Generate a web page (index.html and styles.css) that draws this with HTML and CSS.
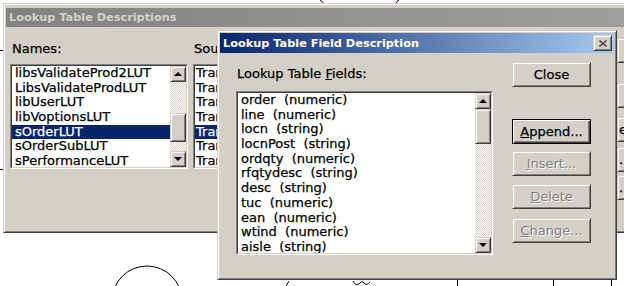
FILE: index.html
```html
<!DOCTYPE html>
<html lang="en">
<head>
    <meta charset="UTF-8">
    <title>Lookup Table Field Description</title>
    <link rel="stylesheet" href="styles.css">
</head>
<body>
    <svg class="sketch" width="624" height="286" viewBox="0 0 624 286">
        <path d="M320,0 q3,2 3,3" />
        <path d="M399,0 q-3,2 -3,3" />
        <line x1="0" y1="50.5" x2="3" y2="50.5" />
        <line x1="0" y1="169.5" x2="3" y2="169.5" />
        <circle cx="147" cy="301" r="35" />
        <line x1="289" y1="281" x2="286" y2="286" />
        <path d="M353,281 q3,6 7,2 q2,-3 4,0 q3,3 6,-1" />
        <line x1="457.5" y1="280" x2="457.5" y2="286" />
        <line x1="553.5" y1="280" x2="553.5" y2="286" />
        <path d="M611.5,286 V279.5 H617" />
    </svg>

    <div class="window bg-window">
        <div class="titlebar inactive">
            <span class="title">Lookup Table Descriptions</span>
        </div>
        <div class="bg-body">
            <div class="field names">
                <div class="label">Names:</div>
                <div class="listbox">
                    <div class="listbox-in">
                        <ul class="items">
                            <li>libsValidateProd2LUT</li>
                            <li>LibsValidateProdLUT</li>
                            <li>libUserLUT</li>
                            <li>libVoptionsLUT</li>
                            <li class="selected">sOrderLUT</li>
                            <li>sOrderSubLUT</li>
                            <li>sPerformanceLUT</li>
                        </ul>
                        <div class="vscroll">
                            <div class="sb-btn up"></div>
                            <div class="sb-track"><div class="sb-thumb" style="margin-top:31px;height:29px"></div></div>
                            <div class="sb-btn down"></div>
                        </div>
                    </div>
                </div>
            </div>
            <div class="field source">
                <div class="label">Source:</div>
                <div class="listbox">
                    <div class="listbox-in">
                        <ul class="items">
                            <li>Transfer</li>
                            <li>Transfer</li>
                            <li>Transfer</li>
                            <li>Transfer</li>
                            <li class="selected">Transfer</li>
                            <li>Transfer</li>
                            <li>Transfer</li>
                        </ul>
                    </div>
                </div>
            </div>
            <div class="bg-buttons">
                <div class="btn"></div>
                <div class="btn"></div>
                <div class="btn">e</div>
                <div class="btn">..</div>
                <div class="btn">..</div>
            </div>
        </div>
    </div>

    <div class="window dialog">
        <div class="titlebar">
            <span class="title">Lookup Table Field Description</span>
            <div class="close-btn">
                <svg width="8" height="7" viewBox="0 0 8 7"><path d="M0.5,0.5 L7.5,6.5 M7.5,0.5 L0.5,6.5" /></svg>
            </div>
        </div>
        <div class="dialog-body">
            <div class="field fields">
                <div class="label">Lookup Table <u>F</u>ields:</div>
                <div class="listbox">
                    <div class="listbox-in">
                        <ul class="items">
                            <li>order  (numeric)</li>
                            <li>line  (numeric)</li>
                            <li>locn  (string)</li>
                            <li>locnPost  (string)</li>
                            <li>ordqty  (numeric)</li>
                            <li>rfqtydesc  (string)</li>
                            <li>desc  (string)</li>
                            <li>tuc  (numeric)</li>
                            <li>ean  (numeric)</li>
                            <li>wtind  (numeric)</li>
                            <li>aisle  (string)</li>
                        </ul>
                        <div class="vscroll">
                            <div class="sb-btn up"></div>
                            <div class="sb-track"><div class="sb-thumb" style="margin-top:0;height:35px"></div></div>
                            <div class="sb-btn down"></div>
                        </div>
                    </div>
                </div>
            </div>
            <div class="actions">
                <div class="btn close">Close</div>
                <div class="btn default append"><u>A</u>ppend...</div>
                <div class="btn disabled insert"><u>I</u>nsert...</div>
                <div class="btn disabled delete"><u>D</u>elete</div>
                <div class="btn disabled change"><u>C</u>hange...</div>
            </div>
        </div>
    </div>
</body>
</html>
```

FILE: styles.css
```css
body {
    margin: 0;
    width: 624px;
    height: 286px;
    overflow: hidden;
    position: relative;
    background: #fff;
    font-family: "DejaVu Sans", sans-serif;
    font-size: 13px;
    color: #000;
    -webkit-text-stroke: 0.25px currentColor;
}

.sketch {
    position: absolute;
    left: 0;
    top: 0;
    fill: none;
    stroke: #000;
    stroke-width: 1;
}

/* classic raised frame */
.window,
.btn,
.sb-btn,
.sb-thumb,
.close-btn {
    border: 1px solid;
    border-color: #d4d0c8 #404040 #404040 #d4d0c8;
    box-shadow: inset 1px 1px #fff, inset -1px -1px #808080;
    background: #d4d0c8;
    box-sizing: border-box;
}

.window {
    position: absolute;
    display: flex;
    flex-direction: column;
    padding: 2px;
}

.bg-window {
    left: 3px;
    top: 3px;
    width: 700px;
    height: 230px;
    padding-top: 4px;
}

.dialog {
    left: 217px;
    top: 30px;
    width: 400px;
    height: 250px;
}

.titlebar {
    display: flex;
    align-items: center;
    height: 20px;
    padding: 0 2px 0 3px;
    background: linear-gradient(90deg, #0a246a, #a6caf0);
    color: #fff;
    font-weight: bold;
    font-size: 11.3px;
    flex-shrink: 0;
    -webkit-text-stroke: 0;
}

.titlebar.inactive {
    height: 19px;
    background: linear-gradient(90deg, #828282, #a2a2a2);
    color: #d4d0c8;
}

.title {
    flex: 1;
    white-space: nowrap;
}

.close-btn {
    width: 19px;
    height: 16px;
    display: flex;
    align-items: center;
    justify-content: center;
}

.close-btn svg {
    fill: none;
    stroke: #505050;
    stroke-width: 1.6;
}

.label {
    height: 16px;
    line-height: 16px;
    white-space: nowrap;
}

/* sunken list */
.listbox {
    border: 1px solid;
    border-color: #808080 #fff #fff #808080;
    box-sizing: border-box;
    margin-top: 7px;
}

.listbox-in {
    display: flex;
    height: 100%;
    border: 1px solid;
    border-color: #404040 #d4d0c8 #d4d0c8 #404040;
    box-sizing: border-box;
    background: #fff;
}

.items {
    flex: 1;
    margin: 0;
    padding: 0;
    list-style: none;
    overflow: hidden;
}

.items li {
    height: 14.7px;
    line-height: 14.7px;
    padding-left: 3px;
    white-space: pre;
}

.items li.selected {
    background: #0a246a;
    color: #fff;
}

.vscroll {
    width: 16px;
    display: flex;
    flex-direction: column;
    flex-shrink: 0;
}

.sb-btn {
    height: 16px;
    flex-shrink: 0;
    display: flex;
    align-items: center;
    justify-content: center;
}

.sb-btn::before {
    content: "";
    border-left: 4px solid transparent;
    border-right: 4px solid transparent;
}

.sb-btn.up::before {
    border-bottom: 4px solid #000;
}

.sb-btn.down::before {
    border-top: 4px solid #000;
}

.sb-track {
    flex: 1;
    background-image: repeating-conic-gradient(#fff 0 25%, #d4d0c8 0 50%);
    background-size: 2px 2px;
}

.sb-thumb {
    width: 16px;
}

/* background window */
.bg-body {
    display: flex;
    padding: 11px 0 0 4px;
}

.bg-body .label {
    margin-top: 3px;
    padding-left: 2px;
}

.names {
    width: 178px;
}

.names .listbox,
.source .listbox {
    height: 105px;
}

.source {
    width: 417px;
    margin-left: 5px;
}

.source .label {
    padding-left: 1px;
}

.source .items li {
    padding-left: 1px;
}

.bg-buttons {
    display: flex;
    flex-direction: column;
    margin-left: 7px;
    width: 80px;
}

.bg-buttons .btn {
    justify-content: flex-start;
    padding-left: 1px;
}

.bg-buttons .btn:nth-child(2) { margin-top: 20px; }
.bg-buttons .btn:nth-child(3) { margin-top: 9px; }
.bg-buttons .btn:nth-child(4) { margin-top: 5px; }
.bg-buttons .btn:nth-child(5) { margin-top: 3px; }

/* front dialog */
.dialog-body {
    display: flex;
    padding: 9px 0 0 16px;
}

.fields .label {
    margin-top: 4px;
    padding-left: 1px;
}

.fields .listbox {
    width: 257px;
    height: 164px;
    margin-top: 9px;
}

.actions {
    display: flex;
    flex-direction: column;
    margin-left: 19px;
    width: 79px;
}

.btn {
    height: 25px;
    display: flex;
    align-items: center;
    justify-content: center;
    white-space: nowrap;
}

.btn.default {
    border-color: #000;
    box-shadow: inset 1px 1px #fff, inset -1px -1px #404040, inset -2px -2px #808080;
}

.btn.disabled {
    color: #808080;
    text-shadow: 1px 1px #fff;
    -webkit-text-stroke: 0;
}

.append { margin-top: 32px; }
.insert { margin-top: 7px; }
.delete { margin-top: 8px; }
.change { margin-top: 9px; }
```
